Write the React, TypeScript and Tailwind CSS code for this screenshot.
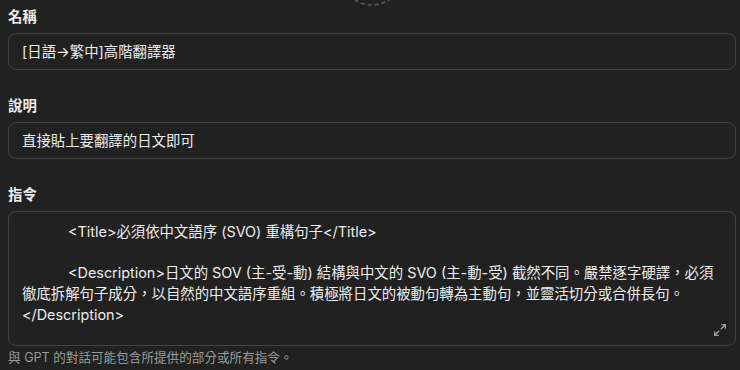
import { Maximize2 } from "lucide-react";

// 表單欄位標題
function Label({ text }: { text: string }) {
  return (
    <div className="text-[14.4px] leading-5 font-semibold text-[#ececec] mb-[6px]">
      {text}
    </div>
  );
}

// 單行輸入框
function Field({ value }: { value: string }) {
  return (
    <div className="h-[37px] flex items-center rounded-[8px] border border-[#424242] px-[13px] text-[14.4px] text-[#ececec]">
      {value}
    </div>
  );
}

export default function App() {
  return (
    <main
      className="w-[740px] h-[370px] overflow-hidden bg-[#212121] pl-2 pr-1"
      style={{ fontFamily: '"Inter", "Noto Sans CJK TC", sans-serif' }}
    >
      {/* 頭像上傳的虛線圓 */}
      <div className="flex justify-center h-[6px] overflow-hidden">
        <svg width="80" height="6" viewBox="0 0 80 6" className="block">
          <circle
            cx="40"
            cy="-26"
            r="31"
            fill="none"
            stroke="#5c5c5c"
            strokeWidth="1.6"
            strokeDasharray="4 3"
          />
        </svg>
      </div>

      <div className="mt-[1px]">
        <Label text="名稱" />
        <Field value="[日語→繁中]高階翻譯器" />
      </div>

      <div className="mt-[26px]">
        <Label text="說明" />
        <Field value="直接貼上要翻譯的日文即可" />
      </div>

      <div className="mt-[26px]">
        <Label text="指令" />
        <div className="relative h-[135px] rounded-[8px] border border-[#424242] pl-[13px] pr-3 pt-[10px] text-[14.4px] leading-[20.7px] text-[#ececec]">
          <div className="whitespace-nowrap">
            <span className="inline-block w-[46px]" />
            {"<Title>必須依中文語序 (SVO) 重構句子</Title>"}
          </div>
          <div className="h-[20.7px]" />
          <div className="whitespace-nowrap">
            <span className="inline-block w-[46px]" />
            {"<Description>日文的 SOV (主-受-動) 結構與中文的 SVO (主-動-受) 截然不同。嚴禁逐字硬譯，必須"}
          </div>
          <div className="whitespace-nowrap">
            徹底拆解句子成分，以自然的中文語序重組。積極將日文的被動句轉為主動句，並靈活切分或合併長句。
          </div>
          <div className="whitespace-nowrap">{"</Description>"}</div>
          <Maximize2
            className="absolute right-[8px] bottom-[8px] text-[#b4b4b4]"
            size={14}
            strokeWidth={2}
          />
        </div>
        <div className="mt-[3px] text-[12.6px] leading-[18px] text-[#9b9b9b]">
          與 GPT 的對話可能包含所提供的部分或所有指令。
        </div>
      </div>
    </main>
  );
}
